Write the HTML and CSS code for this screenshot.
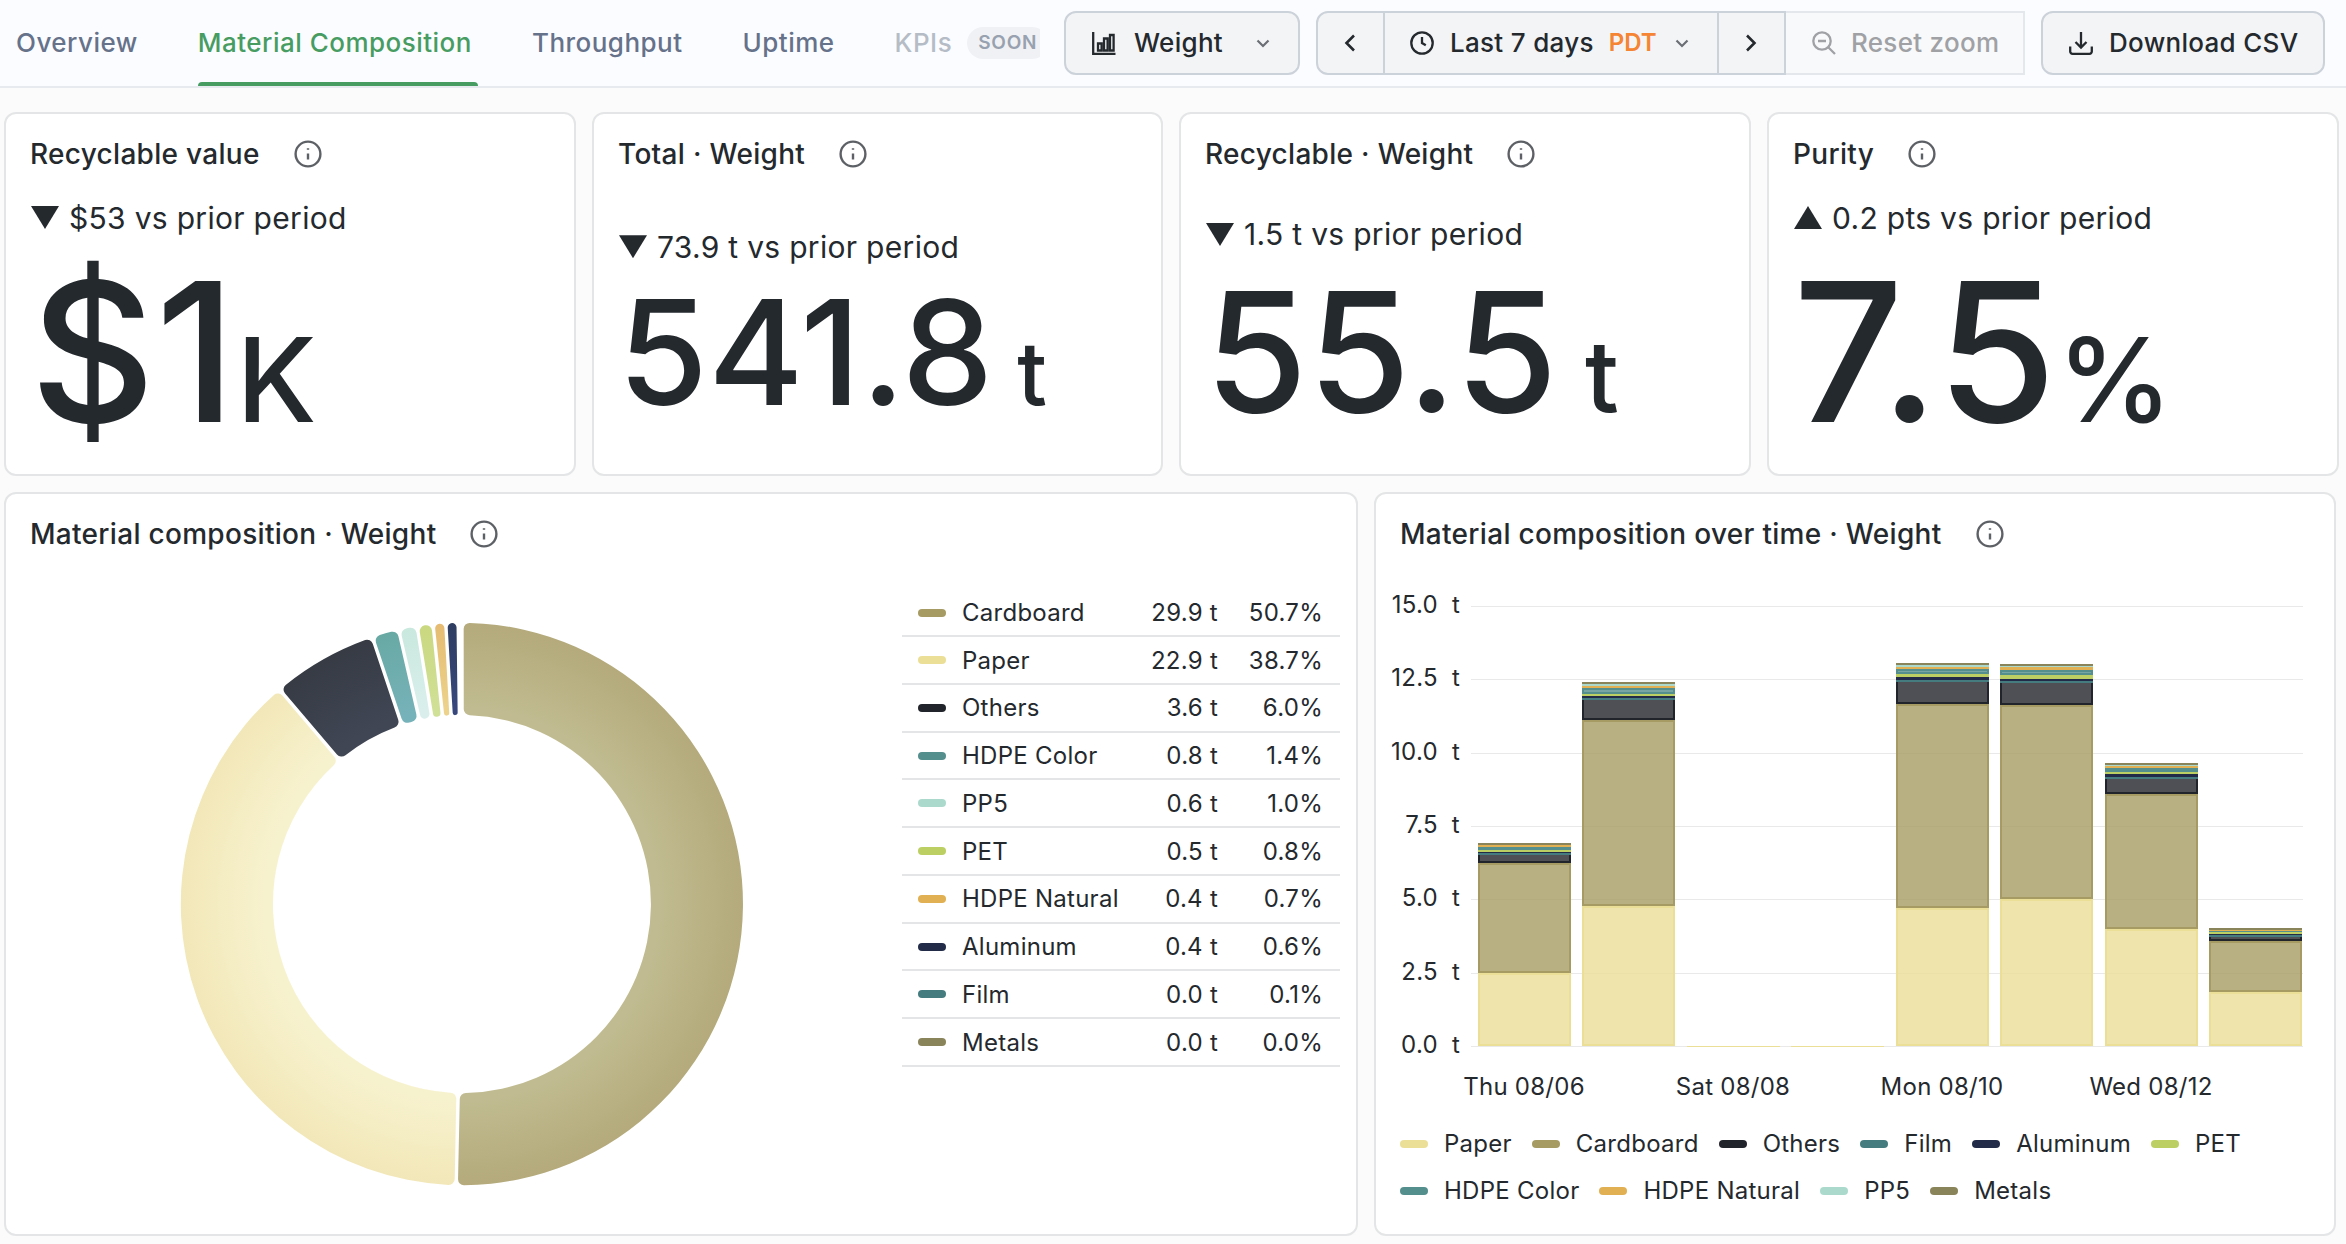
FILE: index.html
```html
<!DOCTYPE html>
<html lang="en">
<head>
  <meta charset="UTF-8">
  <meta name="viewport" content="width=device-width, initial-scale=1.0">
  <title>Material Composition</title>
  <link rel="stylesheet" href="styles.css">
</head>
<body>
  <!-- Top bar -->
  <header class="topbar">
    <nav class="tabs">
      <a class="tab">Overview</a>
      <a class="tab active">Material Composition</a>
      <a class="tab">Throughput</a>
      <a class="tab">Uptime</a>
      <a class="tab disabled">KPIs <span class="pill">SOON</span></a>
    </nav>

    <button class="btn btn-metric">
      <svg class="icon" viewBox="0 0 24 24"><path d="M1.2 1v22H23.5M6 19.5v-7h3.6v7zM12 19.5V7.5h3.6v12zM18 19.5V4h3.6v15.5z"/></svg>
      <span>Weight</span>
      <svg class="chev" viewBox="0 0 14 9"><path d="M1.5 1.5 7 7l5.5-5.5"/></svg>
    </button>

    <div class="btn-group">
      <button class="btn btn-arrow"><svg class="arrow" viewBox="0 0 12 18"><path d="M10 1.5 2.5 9l7.5 7.5"/></svg></button>
      <button class="btn btn-range">
        <svg class="icon" viewBox="0 0 24 24"><circle cx="12" cy="12" r="10.7"/><path d="M12 6v6l3.8 2.3"/></svg>
        <span>Last 7 days</span>
        <span class="tz">PDT</span>
        <svg class="chev" viewBox="0 0 14 9"><path d="M1.5 1.5 7 7l5.5-5.5"/></svg>
      </button>
      <button class="btn btn-arrow"><svg class="arrow" viewBox="0 0 12 18"><path d="M2 1.5 9.5 9 2 16.5"/></svg></button>
      <button class="btn btn-reset" disabled>
        <svg class="icon" viewBox="0 0 24 24"><circle cx="10" cy="10" r="8.7"/><path d="M6 10h8M16.5 16.5 23 23"/></svg>
        <span>Reset zoom</span>
      </button>
    </div>

    <button class="btn btn-download">
      <svg class="icon" viewBox="0 0 24 24"><path d="M12 1v15M6.5 11l5.5 5.5 5.5-5.5M1.2 15.5v5a2.3 2.3 0 0 0 2.3 2.3h17a2.3 2.3 0 0 0 2.3-2.3v-5"/></svg>
      <span>Download CSV</span>
    </button>
  </header>

  <!-- Stat panels -->
  <section class="stats">
    <div class="panel">
      <h2 class="panel-title">Recyclable value <svg class="info" viewBox="0 0 28 28"><circle cx="14" cy="14" r="12.4"/><path d="M14 13.5v6M14 8.2v1.6"/></svg></h2>
      <div class="stat stat-lg">
        <div class="delta"><i class="down"></i>$53 vs prior period</div>
        <div class="value">$1<span class="unit">K</span></div>
      </div>
    </div>
    <div class="panel">
      <h2 class="panel-title">Total · Weight <svg class="info" viewBox="0 0 28 28"><circle cx="14" cy="14" r="12.4"/><path d="M14 13.5v6M14 8.2v1.6"/></svg></h2>
      <div class="stat stat-sm">
        <div class="delta"><i class="down"></i>73.9 t vs prior period</div>
        <div class="value">541.8<span class="unit">&nbsp;t</span></div>
      </div>
    </div>
    <div class="panel">
      <h2 class="panel-title">Recyclable · Weight <svg class="info" viewBox="0 0 28 28"><circle cx="14" cy="14" r="12.4"/><path d="M14 13.5v6M14 8.2v1.6"/></svg></h2>
      <div class="stat stat-md">
        <div class="delta"><i class="down"></i>1.5 t vs prior period</div>
        <div class="value">55.5<span class="unit">&nbsp;t</span></div>
      </div>
    </div>
    <div class="panel">
      <h2 class="panel-title">Purity <svg class="info" viewBox="0 0 28 28"><circle cx="14" cy="14" r="12.4"/><path d="M14 13.5v6M14 8.2v1.6"/></svg></h2>
      <div class="stat stat-lg">
        <div class="delta"><i class="up"></i>0.2 pts vs prior period</div>
        <div class="value">7.5<span class="unit">%</span></div>
      </div>
    </div>
  </section>

  <!-- Charts -->
  <section class="charts">
    <div class="panel">
      <h2 class="panel-title">Material composition · Weight <svg class="info" viewBox="0 0 28 28"><circle cx="14" cy="14" r="12.4"/><path d="M14 13.5v6M14 8.2v1.6"/></svg></h2>
      <div class="pie-body">
        <div class="pie-wrap"><svg id="pie" class="pie" viewBox="-283 -283 566 566"></svg></div>
        <table class="pie-table"><tbody id="pieRows"></tbody></table>
      </div>
    </div>
    <div class="panel">
      <h2 class="panel-title">Material composition over time · Weight <svg class="info" viewBox="0 0 28 28"><circle cx="14" cy="14" r="12.4"/><path d="M14 13.5v6M14 8.2v1.6"/></svg></h2>
      <svg id="timeline" class="timeline" viewBox="0 0 958 548"></svg>
      <ul class="legend" id="legend"></ul>
    </div>
  </section>

  <script src="charts.js"></script>
</body>
</html>
```
FILE: styles.css
```css
* {
  box-sizing: border-box;
}
body {
  margin: 0;
  width: 2346px;
  height: 1244px;
  overflow: hidden;
  background: #fbfbfb;
  color: #24292e;
  font-family: Inter, "Liberation Sans", sans-serif;
  font-size: 28px;
  letter-spacing: 0.3px;
}

/* top bar */
.topbar {
  display: flex;
  align-items: center;
  height: 88px;
  background: #fbfcff;
  border-bottom: 2px solid #e7ebef;
}
.tabs {
  display: flex;
  width: 1040px;
  height: 86px;
  padding-left: 16px;
  gap: 54px;
  overflow: hidden;
  margin-right: 24px;
}
.tab {
  display: flex;
  align-items: center;
  flex: none;
  height: 86px;
  padding: 0 6px 2px 0;
  font-size: 26px;
  font-weight: 500;
  letter-spacing: 0.48px;
  color: #66728a;
}
.tab.active {
  color: #479c62;
  position: relative;
}
.tab.active::after {
  content: "";
  position: absolute;
  left: 0;
  right: 0;
  bottom: 0;
  height: 4px;
  background: #479c62;
  border-radius: 4px 4px 0 0;
}
.tab.disabled {
  color: #b5bcc6;
}
.pill {
  height: 32px;
  margin: 2px 0 0 15px;
  padding: 0 11px;
  border-radius: 16px;
  background: #f0f1f4;
  color: #98a1af;
  font-size: 19px;
  font-weight: 600;
  line-height: 31px;
  letter-spacing: 0.8px;
}
.btn {
  display: flex;
  align-items: center;
  height: 64px;
  padding: 0;
  border: 2px solid #ccd2d9;
  border-radius: 12px;
  background: #f3f4f6;
  color: #24292e;
  font-family: inherit;
  font-size: 26px;
  font-weight: 500;
  letter-spacing: 0.3px;
}
.btn span {
  padding-bottom: 2px;
}
svg {
  flex: none;
  fill: none;
  stroke: currentColor;
}
.icon {
  width: 24px;
  height: 24px;
  stroke-width: 2.3;
}
.chev {
  width: 14px;
  height: 9px;
  color: #6b6f75;
  stroke-width: 2.2;
}
.arrow {
  width: 12px;
  height: 18px;
  stroke-width: 2.6;
}
.btn-metric {
  width: 236px;
  padding-left: 26px;
  margin-right: 16px;
}
.btn-metric .icon {
  margin-right: 18px;
}
.btn-metric .chev {
  margin-left: auto;
  margin-right: 28px;
}
.btn-group {
  display: flex;
  margin-right: 16px;
}
.btn-group .btn {
  border-radius: 0;
  margin-right: -2px;
}
.btn-group .btn:first-child {
  border-radius: 12px 0 0 12px;
}
.btn-arrow {
  position: relative;
  width: 69px;
  padding-right: 2px;
  justify-content: center;
}
.btn-range {
  width: 336px;
  padding-left: 25px;
}
.btn-range .icon {
  margin-right: 16px;
}
.tz {
  margin-left: 15px;
  color: #f58433;
  font-size: 24px;
  font-weight: 600;
  letter-spacing: 0;
}
.btn-range .chev {
  margin-left: 18px;
}
.btn-group .btn-reset {
  width: 241px;
  margin: 0;
  padding-left: 28px;
  border: 2px solid #e4e7eb;
  border-left: none;
  background: #f8f9fb;
  color: #9fa1a5;
}
.btn-reset .icon {
  margin-right: 15px;
}
.btn-download {
  width: 284px;
  padding-left: 26px;
}
.btn-download .icon {
  margin-right: 16px;
}

/* panels */
.stats {
  display: grid;
  grid-template-columns: 572px 571px 572px 572px;
  gap: 16px;
  height: 364px;
  margin: 24px 8px 16px 4px;
}
.charts {
  display: grid;
  grid-template-columns: 1354px 962px;
  gap: 16px;
  height: 744px;
  margin-left: 4px;
}
.panel {
  display: flex;
  flex-direction: column;
  border: 2px solid #e4e5e6;
  border-radius: 12px;
  background: #fff;
}
.panel-title {
  display: flex;
  align-items: center;
  height: 78px;
  margin: 0;
  padding: 2px 0 0 24px;
  font-size: 28px;
  font-weight: 500;
}
.info {
  width: 28px;
  height: 28px;
  margin-left: 34px;
  color: #5d6166;
  stroke-width: 2.4;
}

/* stat values */
.stat {
  display: flex;
  flex: 1;
  flex-direction: column;
  justify-content: center;
  padding: 2px 0 0 24px;
}
.delta {
  display: flex;
  align-items: center;
  height: 36px;
  font-size: 30px;
}
.delta i {
  width: 28px;
  height: 23px;
  margin: 0 10px 0 1px;
  background: #24292e;
}
.down {
  clip-path: polygon(0 0, 100% 0, 50% 100%);
}
.up {
  clip-path: polygon(50% 0, 100% 100%, 0 100%);
}
.value {
  font-weight: 500;
  line-height: 1.2;
  white-space: nowrap;
}
.unit {
  font-size: 0.6em;
}
.stat-lg .value {
  font-size: 194px;
}
.stat-md .value {
  font-size: 166px;
}
.stat-sm .value {
  font-size: 145.5px;
}

/* pie */
.pie-body {
  display: flex;
  flex: 1;
  padding: 0 16px;
}
.pie-wrap {
  display: flex;
  flex: 1;
  align-items: center;
  justify-content: center;
  padding-top: 2px;
}
.pie {
  width: 566px;
  height: 566px;
  stroke: none;
}
.pie-table {
  width: 438px;
  height: 477px;
  margin-top: 18px;
  border-collapse: collapse;
  font-size: 24px;
  letter-spacing: 0.26px;
}
.pie-table td {
  padding: 0;
  border-bottom: 2px solid #e4e5e6;
  text-align: right;
}
.pie-table td:first-child {
  width: 60px;
  padding-left: 16px;
}
.pie-table td:nth-child(2) {
  text-align: left;
}
.pie-table td:nth-child(3) {
  padding-right: 18px;
}
.pie-table td:last-child {
  width: 104px;
  padding-right: 17px;
}
.swatch {
  display: block;
  width: 28px;
  height: 8px;
  border-radius: 4px;
}

/* timeline */
.timeline {
  width: 958px;
  height: 548px;
  stroke: none;
  font-size: 24px;
  letter-spacing: 0.26px;
}
.timeline text {
  fill: #24292e;
}
.timeline .grid {
  fill: #e9e9ea;
}
.legend {
  display: flex;
  flex-wrap: wrap;
  margin: 0;
  padding: 0 24px;
  list-style: none;
  font-size: 24px;
  letter-spacing: 0.26px;
}
.legend li {
  display: flex;
  align-items: center;
  height: 47px;
  margin-right: 20px;
}
.legend .swatch {
  margin-right: 16px;
}
```
FILE: charts.js
```js
const COLORS = {
  Paper: "#ebdf97",
  Cardboard: "#a69b63",
  Others: "#22242c",
  Film: "#457c7f",
  Aluminum: "#222c48",
  PET: "#bccf62",
  "HDPE Color": "#548e8d",
  "HDPE Natural": "#e0b052",
  PP5: "#abdacd",
  Metals: "#8a845a"
};

// name, weight, share, sweep in radians, inner and outer gradient colors
const SLICES = [
  ["Cardboard", "29.9 t", "50.7%", 3.162, "#c0bb90", "#b4aa7b"],
  ["Paper", "22.9 t", "38.7%", 2.416, "#f7f2ce", "#f2e7b8"],
  ["Others", "3.6 t", "6.0%", 0.381, "#404654", "#363b44"],
  ["HDPE Color", "0.8 t", "1.4%", 0.097, "#76b2b9", "#68a9a4"],
  ["PP5", "0.6 t", "1.0%", 0.067, "#daefec", "#c9e8de"],
  ["PET", "0.5 t", "0.8%", 0.057, "#d0e096", "#cad880"],
  ["HDPE Natural", "0.4 t", "0.7%", 0.0455, "#ecd28b", "#e5bb71"],
  ["Aluminum", "0.4 t", "0.6%", 0.044, "#37477c", "#2e3d60"],
  ["Film", "0.0 t", "0.1%", 0, "", ""],
  ["Metals", "0.0 t", "0.0%", 0, "", ""]
];

// Pie
const R = 281.2, r = 189, GAP = 1.7;

function pt(radius, a) {
  return (radius * Math.sin(a)).toFixed(2) + " " + (-radius * Math.cos(a)).toFixed(2);
}

function slicePath(start, end) {
  const po = Math.asin(GAP / R), pi = Math.asin(GAP / r);
  const a0 = start + po, a1 = end - po, b0 = start + pi, b1 = end - pi;
  const co = Math.min(6, (a1 - a0) * R / 2), ci = Math.min(6, (b1 - b0) * r / 2);
  const bigOut = a1 - a0 - 2 * co / R > Math.PI ? 1 : 0;
  const bigIn = b1 - b0 - 2 * ci / r > Math.PI ? 1 : 0;
  // corner arcs, each one cut back along both of its edges
  return "M" + pt(R - co, a0) +
    `A${co} ${co} 0 0 1 ` + pt(R, a0 + co / R) +
    `A${R} ${R} 0 ${bigOut} 1 ` + pt(R, a1 - co / R) +
    `A${co} ${co} 0 0 1 ` + pt(R - co, a1) +
    "L" + pt(r + ci, b1) +
    `A${ci} ${ci} 0 0 1 ` + pt(r, b1 - ci / r) +
    `A${r} ${r} 0 ${bigIn} 0 ` + pt(r, b0 + ci / r) +
    `A${ci} ${ci} 0 0 1 ` + pt(r + ci, b0) + "Z";
}

let pie = "", rows = "", angle = 0;
SLICES.forEach(([name, weight, share, sweep, inner, outer], i) => {
  if (sweep) {
    pie += `<radialGradient id="g${i}" gradientUnits="userSpaceOnUse" cx="0" cy="0" r="${R}">
      <stop offset="0.7" stop-color="${inner}"/><stop offset="1" stop-color="${outer}"/></radialGradient>
      <path fill="url(#g${i})" d="${slicePath(angle, angle + sweep)}"/>`;
    angle += sweep;
  }
  rows += `<tr><td><span class="swatch" style="background:${COLORS[name]}"></span></td>
    <td>${name}</td><td>${weight}</td><td>${share}</td></tr>`;
});
document.getElementById("pie").innerHTML = pie;
document.getElementById("pieRows").innerHTML = rows;

// Timeline: bar x, then segment heights from the base up, in stack order
const ORDER = ["Paper", "Cardboard", "Others", "Film", "Aluminum", "PET", "HDPE Color", "HDPE Natural", "PP5", "Metals"];
const BARS = [
  [102, 73, 110, 8, 2, 1, 2, 3, 2, 0, 2],
  [206, 140, 186, 20, 2, 2, 2, 6, 2, 2, 2],
  [311, 0],
  [415, 0],
  [520, 138, 204, 22, 2, 3, 3, 5, 2, 2, 2],
  [624, 147, 194, 22, 2, 2, 4, 5, 3, 1, 2],
  [729, 117, 135, 15, 2, 3, 2, 4, 2, 1, 2],
  [833, 54, 51, 4, 2, 1, 2, 1, 1, 0, 2]
];
const BASE = 474, BAR_W = 93;

let chart = "";
[[0, 474], [2.5, 401], [5, 327], [7.5, 254], [10, 181], [12.5, 107], [15, 34]].forEach(([v, y]) => {
  chart += `<rect class="grid" x="95" y="${y}" width="832" height="1"/>
    <text x="84" y="${y + 7}" text-anchor="end">${v.toFixed(1)}&nbsp;&nbsp;t</text>`;
});
BARS.forEach(([x, ...parts]) => {
  let y = BASE;
  if (parts.length === 1) {
    chart += `<rect x="${x}" y="${BASE}" width="${BAR_W}" height="1" fill="${COLORS.Paper}"/>`;
  }
  parts.forEach((h, i) => {
    if (!h) return;
    const c = COLORS[ORDER[i]];
    y -= h;
    if (h > 4 || ORDER[i] === "Others") {
      const top = ORDER[i] === "Others" ? "" : `M${x} ${y + 1}h${BAR_W}`;
      chart += `<rect x="${x}" y="${y}" width="${BAR_W}" height="${h}" fill="${c}" fill-opacity="0.8"/>
        <path d="${top}M${x} ${y + h - 1}h${BAR_W}M${x + 1} ${y}v${h}M${x + BAR_W - 1} ${y}v${h}" stroke="${c}" stroke-width="2"/>`;
    } else {
      chart += `<rect x="${x}" y="${y}" width="${BAR_W}" height="${h}" fill="${c}"/>`;
    }
  });
});
[["Thu 08/06", 148], ["Sat 08/08", 357], ["Mon 08/10", 566], ["Wed 08/12", 775]].forEach(([t, x]) => {
  chart += `<text x="${x}" y="523" text-anchor="middle">${t}</text>`;
});
document.getElementById("timeline").innerHTML = chart;

document.getElementById("legend").innerHTML = ORDER.map(name =>
  `<li><i class="swatch" style="background:${COLORS[name]}"></i><span>${name}</span></li>`).join("");
```
